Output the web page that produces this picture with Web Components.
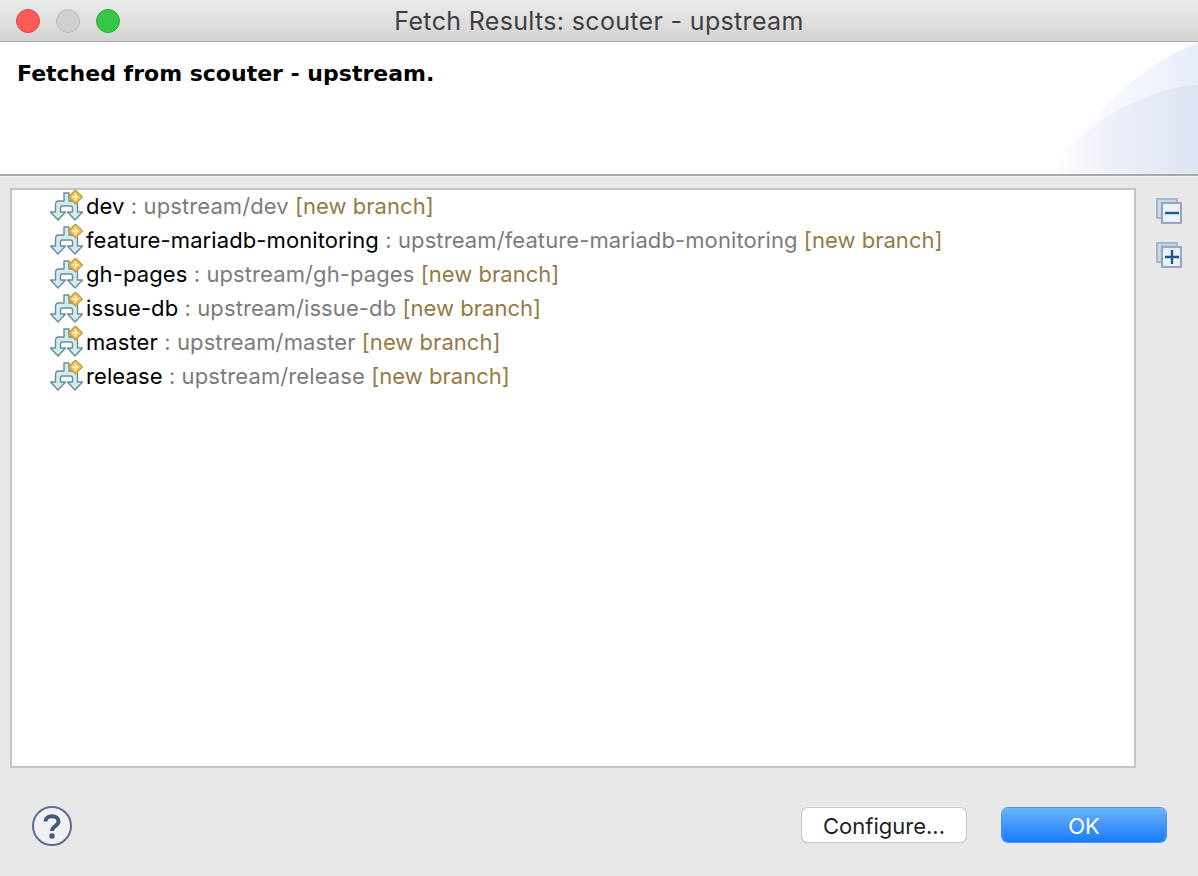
<!DOCTYPE html>
<html>
<head>
<meta charset="utf-8">
<title>Fetch Results</title>
<style>
html,body{margin:0;padding:0;height:100%;background:#e8e8e8;}
body{overflow:hidden;font-family:'Inter','Liberation Sans',sans-serif;}
</style>
</head>
<body>
<fetch-dialog>
  <span slot="title">Fetch Results: scouter - upstream</span>
  <span slot="message">Fetched from scouter - upstream.</span>
  <branch-row name="dev" remote="upstream/dev"></branch-row>
  <branch-row name="feature-mariadb-monitoring" remote="upstream/feature-mariadb-monitoring"></branch-row>
  <branch-row name="gh-pages" remote="upstream/gh-pages"></branch-row>
  <branch-row name="issue-db" remote="upstream/issue-db"></branch-row>
  <branch-row name="master" remote="upstream/master"></branch-row>
  <branch-row name="release" remote="upstream/release"></branch-row>
</fetch-dialog>

<script>
class TitleBar extends HTMLElement {
    constructor() {
        super();
        this.attachShadow({ mode: 'open' });
        this.shadowRoot.innerHTML = `
<style>
:host{display:flex;align-items:center;height:41px;box-sizing:content-box;
  background:linear-gradient(#ebebeb,#d3d3d3);border-bottom:1px solid #b1b1b1;position:relative;}
.lights{display:flex;gap:16px;padding-left:16px;}
.lights i{display:block;width:24px;height:24px;border-radius:50%;box-sizing:border-box;}
.close{background:#fc5b57;border:1px solid #e2463f;}
.min{background:#d0d0d0;border:1px solid #bdbdbd;}
.zoom{background:#34c748;border:1px solid #2dac2f;}
.text{position:absolute;left:0;right:0;top:0;height:41px;line-height:42px;text-align:center;
  font-size:25px;color:#3f3f3f;letter-spacing:.33px;}
</style>
<div class="lights"><i class="close"></i><i class="min"></i><i class="zoom"></i></div>
<div class="text"><slot></slot></div>`;
    }
}

class BannerArea extends HTMLElement {
    constructor() {
        super();
        this.attachShadow({ mode: 'open' });
        this.shadowRoot.innerHTML = `
<style>
:host{display:block;height:132px;background:#fff;position:relative;overflow:hidden;
  border-bottom:2px solid #a9a9a9;box-shadow:0 1px 0 #f3f3f3;}
.msg{padding:17px 0 0 17px;font:bold 22px/30px 'DejaVu Sans',sans-serif;color:#000;}
svg{position:absolute;right:0;top:0;}
</style>
<svg width="158" height="132" viewBox="0 0 158 132">
  <defs>
    <linearGradient id="a" x1="0" x2="1" y1="0" y2="0">
      <stop offset="0" stop-color="#fff"/><stop offset=".5" stop-color="#f5f7fd"/><stop offset="1" stop-color="#e7edf9"/>
    </linearGradient>
    <linearGradient id="b" x1="0" x2="1" y1="0" y2="0">
      <stop offset="0" stop-color="#fff"/><stop offset=".4" stop-color="#eef1fa"/><stop offset="1" stop-color="#dde4f3"/>
    </linearGradient>
  </defs>
  <path d="M13 132C40 90 90 25 158 1V132Z" fill="url(#a)"/>
  <path d="M8 132C30 95 90 48 158 43V132Z" fill="url(#b)"/>
</svg>
<div class="msg"><slot></slot></div>`;
    }
}

class BranchRow extends HTMLElement {
    constructor() {
        super();
        this.attachShadow({ mode: 'open' });
        this.shadowRoot.innerHTML = `
<style>
:host{display:flex;align-items:center;height:34px;padding-left:38px;white-space:nowrap;
  font-size:22px;letter-spacing:.1px;}
svg{flex:none;margin-right:3px;}
.name{color:#000;}
.remote{color:#7c7c7c;white-space:pre;}
.tag{color:#957a45;white-space:pre;letter-spacing:.03px;}
</style>
<svg width="33" height="32" viewBox="0 0 33 32">
  <path d="M14 3h5v8h5.500c2 0 3 1.500 3 4v7h5l-7.500 8-7.500-8h5v-4c0-1-.5-2-2-2h-8c-1.500 0-2 1-2 2v4h5l-7.500 8-7.500-8h5v-7c0-2.500 1-4 3-4H14z"
    fill="#d3eaee" stroke="#668e99" stroke-width="1.400" stroke-linejoin="round"/>
  <path d="M25.500 0l7 7-7 7-7-7z" fill="#ecc15f" stroke="#c8982f" stroke-width="1.200"/>
  <path d="M25.500 3.500v7M22 7h7" stroke="#fff5d2" stroke-width="1.600"/>
</svg>
<span class="name"></span><span class="remote"></span><span class="tag"> [new branch]</span>`;
        this.shadowRoot.querySelector('.name').textContent = this.getAttribute('name');
        this.shadowRoot.querySelector('.remote').textContent = ' : ' + this.getAttribute('remote');
    }
}

class ToolIcon extends HTMLElement {
    constructor() {
        super();
        this.attachShadow({ mode: 'open' });
        const plus = this.getAttribute('kind') === 'plus';
        this.shadowRoot.innerHTML = `
<style>
:host{display:block;width:26px;height:26px;}
</style>
<svg width="26" height="26" viewBox="0 0 26 26">
  <rect x="1" y="1" width="20" height="19" fill="#c4d9eb" stroke="#a8b6cb" stroke-width="2"/>
  <rect x="6" y="5" width="19" height="20" fill="#eaf3fa" stroke="#9ba5bd" stroke-width="2.200"/>
  <path d="${plus ? 'M9 15h14M16 8v14' : 'M9 15h14'}" stroke="#1c5a8e" stroke-width="2.400"/>
</svg>`;
    }
}

class HelpIcon extends HTMLElement {
    constructor() {
        super();
        this.attachShadow({ mode: 'open' });
        this.shadowRoot.innerHTML = `
<style>:host{display:block;width:42px;height:42px;margin-top:2px;}</style>
<svg width="42" height="42" viewBox="0 0 42 42">
  <circle cx="21" cy="21" r="19" fill="#f1f1f3" stroke="#5b6f90" stroke-width="2"/>
  <path d="M14.500 16.500c0-3.500 2.800-5.200 6.500-5.200s6.500 1.800 6.500 5c0 4.700-6.500 4.700-6.500 9.700" fill="none" stroke="#44587a" stroke-width="4"/>
  <circle cx="21" cy="31" r="2.700" fill="#44587a"/>
</svg>`;
    }
}

class DialogButton extends HTMLElement {
    constructor() {
        super();
        this.attachShadow({ mode: 'open' });
        this.shadowRoot.innerHTML = `
<style>
:host{display:block;width:164px;height:34px;box-sizing:border-box;border-radius:6px;text-align:center;
  font-size:22px;line-height:36px;background:#fff;color:#1f1f1f;
  box-shadow:0 0 0 1px #c8c8c8,0 1px 1px #b0b0b0;}
:host([primary]){background:linear-gradient(#6cb3fa,#1a7bfb);color:#fff;box-shadow:0 0 0 1px #4a97f5;}
</style>
<slot></slot>`;
    }
}

class FetchDialog extends HTMLElement {
    constructor() {
        super();
        this.attachShadow({ mode: 'open' });
        this.shadowRoot.innerHTML = `
<style>
:host{display:flex;flex-direction:column;width:1198px;height:876px;background:#e8e8e8;}
.main{display:flex;padding:12px 0 0 10px;}
.tree{width:1122px;height:576px;background:#fff;border:2px solid #c4c4c4;}
.rows{margin-top:-1px;}
.side{display:flex;flex-direction:column;gap:18px;padding:10px 0 0 20px;}
.foot{display:flex;flex:1;align-items:center;padding:6px 32px 0 31px;}
.spacer{flex:1;}
.gap{width:36px;}
</style>
<title-bar><slot name="title"></slot></title-bar>
<banner-area><slot name="message"></slot></banner-area>
<div class="main">
  <div class="tree"><div class="rows"><slot></slot></div></div>
  <div class="side"><tool-icon kind="minus"></tool-icon><tool-icon kind="plus"></tool-icon></div>
</div>
<div class="foot">
  <help-icon></help-icon>
  <div class="spacer"></div>
  <dialog-button>Configure...</dialog-button>
  <div class="gap"></div>
  <dialog-button primary>OK</dialog-button>
</div>`;
    }
}

customElements.define('title-bar', TitleBar);
customElements.define('banner-area', BannerArea);
customElements.define('branch-row', BranchRow);
customElements.define('tool-icon', ToolIcon);
customElements.define('help-icon', HelpIcon);
customElements.define('dialog-button', DialogButton);
customElements.define('fetch-dialog', FetchDialog);
</script>
</body>
</html>
